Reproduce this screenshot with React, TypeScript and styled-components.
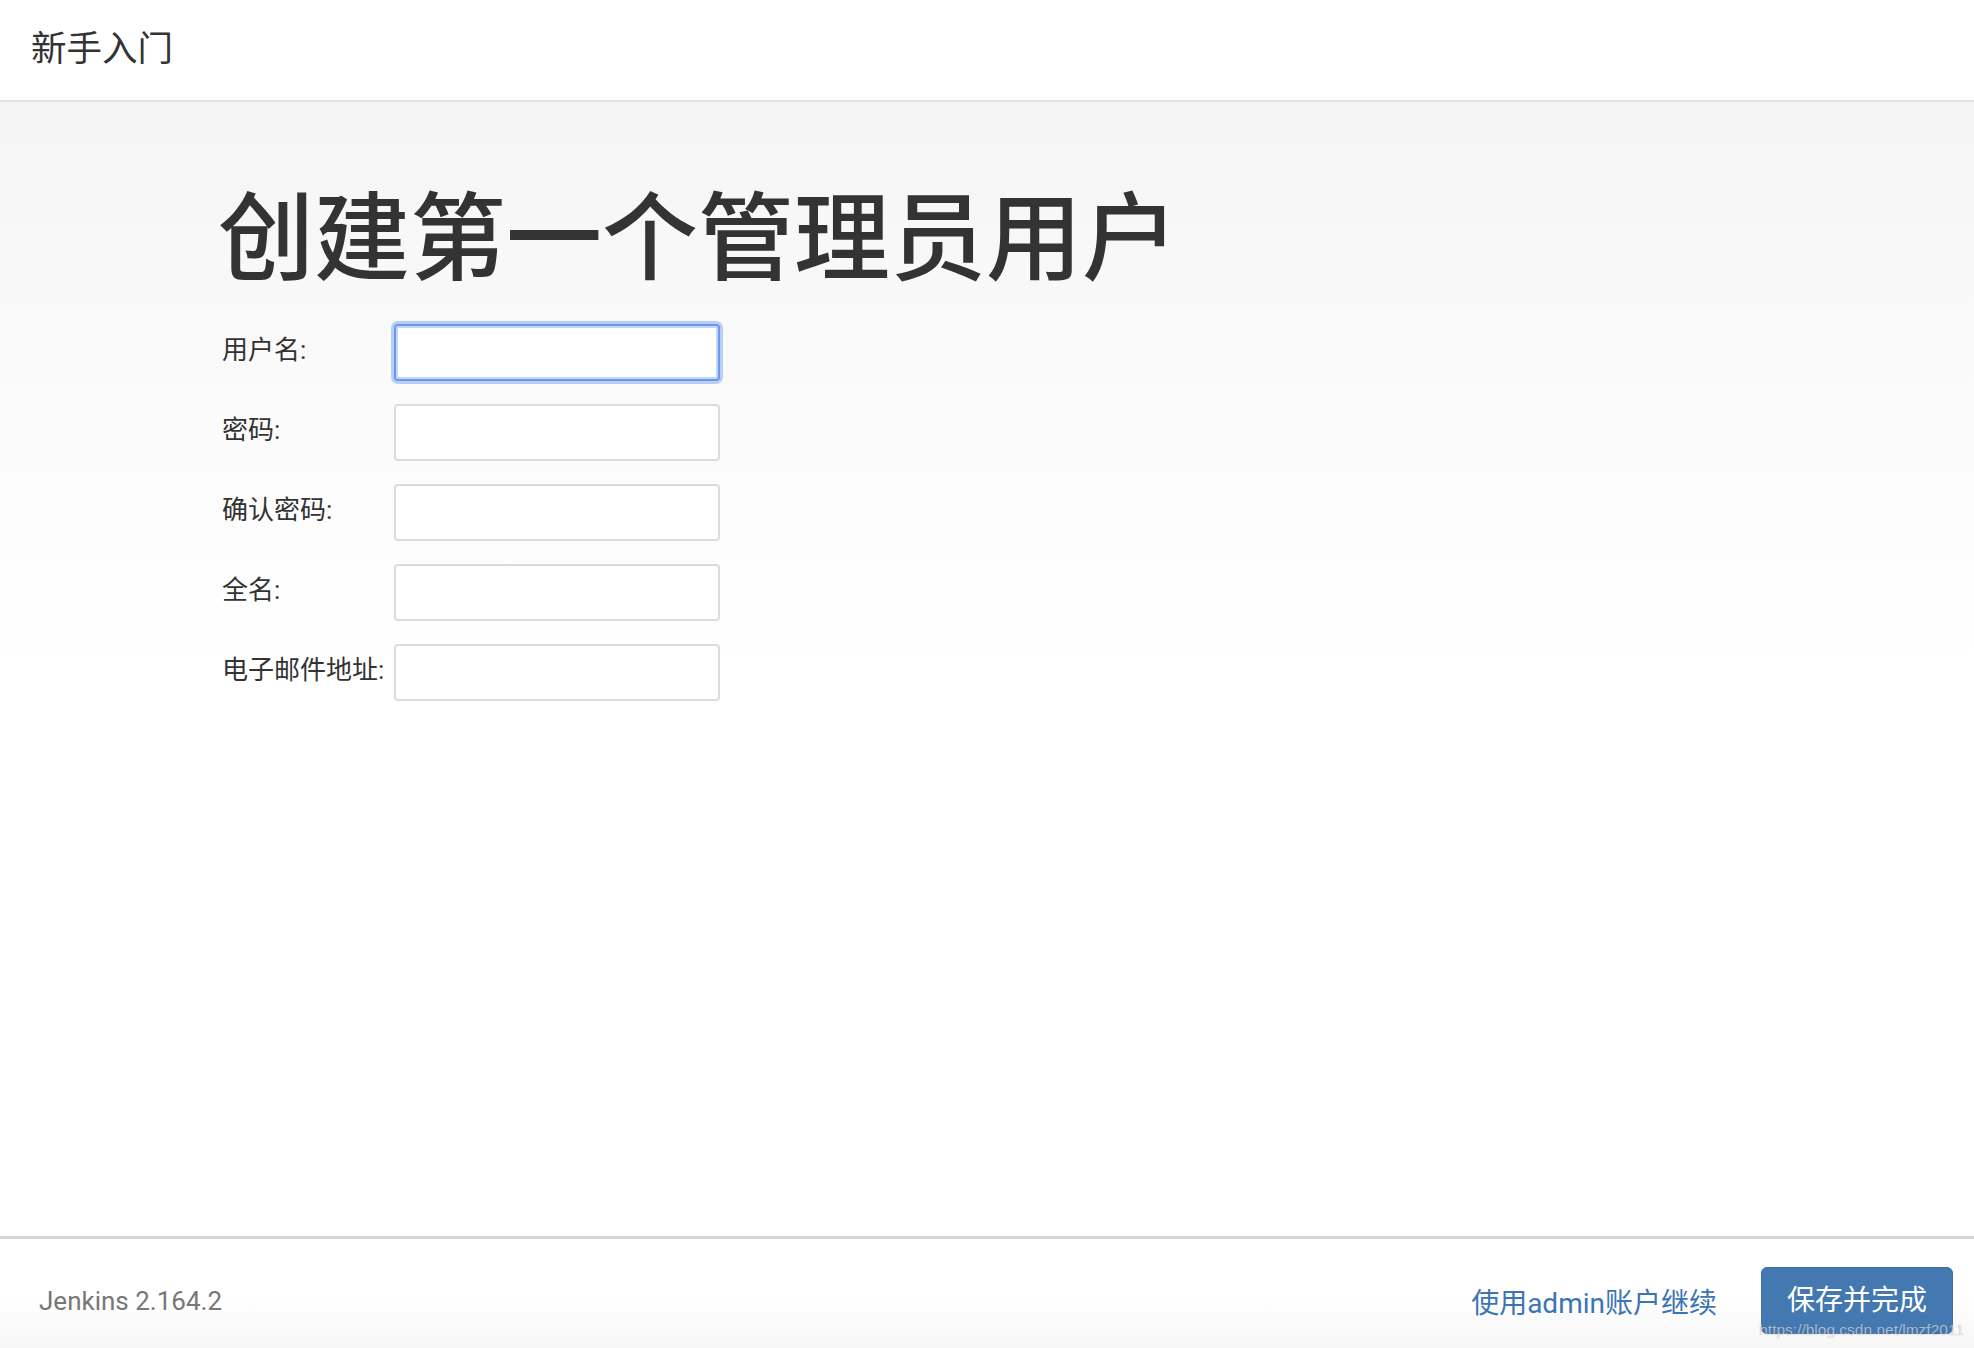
import React from "react";
import styled, { createGlobalStyle } from "styled-components";

const GlobalStyle = createGlobalStyle`
  html, body {
    margin: 0;
    padding: 0;
    height: 100%;
  }
  body {
    font-family: Roboto, "Noto Sans CJK SC", "Noto Sans", sans-serif;
    color: #333;
    background: #fff;
  }
  #root {
    height: 100%;
  }
`;

const Page = styled.div`
  display: flex;
  flex-direction: column;
  height: 100vh;
  overflow: hidden;
`;

const TopBar = styled.header`
  flex: 0 0 auto;
  height: 102px;
  box-sizing: border-box;
  display: flex;
  align-items: center;
  padding: 0 0 0 31px;
  border-bottom: 2px solid #e3e3e3;
  background: #fff;
`;

const TopTitle = styled.div`
  font-size: 35.5px;
  color: #333;
  line-height: 1;
`;

const Main = styled.main`
  flex: 1 1 auto;
  padding: 76px 0 0 218px;
  background: linear-gradient(to bottom, #f5f5f5 0, #fafafa 260px, #fff 560px);
`;

const Heading = styled.h1`
  margin: 0 0 40px;
  font-size: 96px;
  font-weight: 500;
  line-height: 1.1;
  color: #333;
  font-family: "Noto Sans CJK SC", sans-serif;
`;

const Form = styled.div`
  display: flex;
  flex-direction: column;
  gap: 23px;
`;

const Row = styled.div`
  display: flex;
  align-items: flex-start;
`;

const Label = styled.label`
  width: 176px;
  padding: 8px 0 0 4px;
  box-sizing: border-box;
  font-size: 26px;
  line-height: 36px;
  color: #333;
  white-space: nowrap;
`;

const Field = styled.input<{ $focused?: boolean }>`
  width: 326px;
  height: 57px;
  box-sizing: border-box;
  border: 2px solid ${(p) => (p.$focused ? "#6b98ea" : "#dcdcdc")};
  border-radius: 4px;
  background: #fff;
  outline: none;
  padding: 0 12px;
  font-size: 26px;
  box-shadow: ${(p) =>
    p.$focused
      ? "0 0 0 3px rgba(130, 170, 240, 0.55), inset 0 0 0 2px rgba(190, 210, 248, 0.9)"
      : "none"};
`;

const Footer = styled.footer`
  position: relative;
  flex: 0 0 112px;
  box-sizing: border-box;
  display: flex;
  align-items: center;
  padding: 14px 21px 0 39px;
  border-top: 3px solid #d6d6d6;
  background: linear-gradient(to bottom, #fff 0, #fff 55%, #f6f6f6 100%);
`;

const Version = styled.span`
  flex: 1;
  font-size: 26px;
  color: #777;
`;

const TextLink = styled.a`
  margin-right: 44px;
  font-size: 28px;
  color: #3d74b4;
  text-decoration: none;
  cursor: pointer;
`;

const PrimaryButton = styled.button`
  height: 67px;
  padding: 0 25px;
  border: 1px solid #3d6ea8;
  border-radius: 6px;
  background: #4478b1;
  color: #fff;
  font-family: Roboto, "Noto Sans CJK SC", sans-serif;
  font-size: 28px;
  line-height: 1;
  cursor: pointer;
`;

const Watermark = styled.span`
  position: absolute;
  right: 10px;
  bottom: 9px;
  font-family: "Liberation Sans", Arial, sans-serif;
  font-size: 15.5px;
  color: rgba(255, 255, 255, 0.6);
  text-shadow: 0 0 1px rgba(0, 0, 0, 0.3);
  pointer-events: none;
`;

const fields = [
  { label: "用户名:", type: "text", focused: true },
  { label: "密码:", type: "password" },
  { label: "确认密码:", type: "password" },
  { label: "全名:", type: "text" },
  { label: "电子邮件地址:", type: "email" },
];

export default function App() {
  return (
    <Page>
      <GlobalStyle />
      <TopBar>
        <TopTitle>新手入门</TopTitle>
      </TopBar>
      <Main>
        <Heading>创建第一个管理员用户</Heading>
        <Form>
          {fields.map((f) => (
            <Row key={f.label}>
              <Label>{f.label}</Label>
              <Field type={f.type} $focused={f.focused} />
            </Row>
          ))}
        </Form>
      </Main>
      <Footer>
        <Version>Jenkins 2.164.2</Version>
        <TextLink>使用admin账户继续</TextLink>
        <PrimaryButton>保存并完成</PrimaryButton>
        <Watermark>https://blog.csdn.net/lmzf2011</Watermark>
      </Footer>
    </Page>
  );
}
